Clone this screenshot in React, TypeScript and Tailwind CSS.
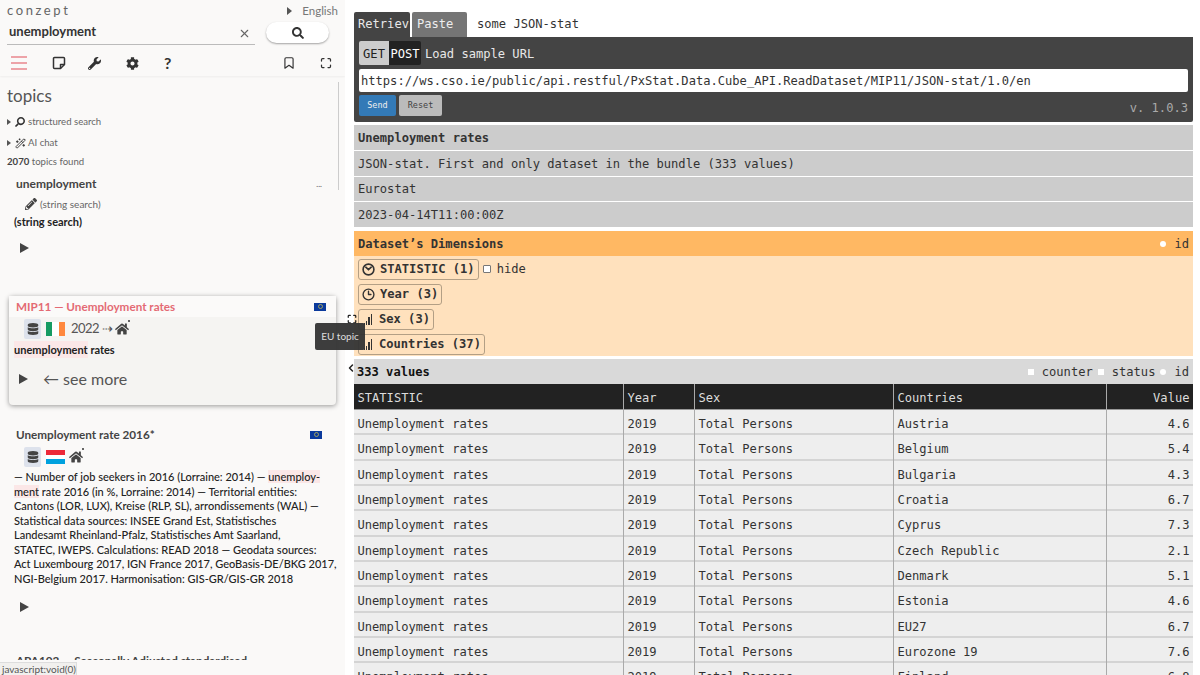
import { FaCog, FaDatabase, FaHome, FaPencilAlt, FaSearch, FaWrench } from "react-icons/fa"
import { FiBookmark, FiMaximize } from "react-icons/fi"
import { LuWandSparkles, LuX, LuChevronLeft, LuClock3 } from "react-icons/lu"

const countries = [
    ["Austria", "4.6"], ["Belgium", "5.4"], ["Bulgaria", "4.3"], ["Croatia", "6.7"], ["Cyprus", "7.3"],
    ["Czech Republic", "2.1"], ["Denmark", "5.1"], ["Estonia", "4.6"], ["EU27", "6.7"], ["Eurozone 19", "7.6"], ["Finland", "6.8"],
]

function Flag({ colors }: { colors: "ie" | "lu" }) {
    if (colors === "ie") {
        return <span className="flex w-[19px] h-[14px]"><span className="flex-1 bg-[#169b62]" /><span className="flex-1 bg-white" /><span className="flex-1 bg-[#ff883e]" /></span>
    }
    return <span className="flex flex-col w-[19px] h-[14px]"><span className="flex-1 bg-[#ed2939]" /><span className="flex-1 bg-white" /><span className="flex-1 bg-[#00a1de]" /></span>
}

function EuFlag() {
    return <span className="w-3 h-2 bg-[#0b3a9c] flex items-center justify-center"><span className="w-[5px] h-[5px] rounded-full border border-[#d6c84a]/70" /></span>
}

function Arrow() {
    return <span className="block w-0 h-0 border-y-[5px] border-y-transparent border-l-[9px] border-l-[#444]" />
}

function Note() {
    return (
        <svg width="14" height="14" viewBox="0 0 14 14" fill="none" stroke="currentColor" strokeWidth="1.5" strokeLinejoin="round">
            <path d="M2.5 1.5h9a1 1 0 0 1 1 1V8.5L8.5 12.5H2.5a1 1 0 0 1-1-1v-9a1 1 0 0 1 1-1z" />
            <path d="M12.5 8.5H8.5v4" />
        </svg>
    )
}

function Gauge() {
    return (
        <svg width="13" height="13" viewBox="0 0 13 13" fill="none" stroke="currentColor" strokeWidth="1.6" strokeLinecap="round">
            <circle cx="6.5" cy="6.5" r="5.4" />
            <path d="M3.8 4.2l2.7 2.5 2.7-2.5" />
        </svg>
    )
}

function Small({ icon, label }: { icon: React.ReactNode; label: string }) {
    return (
        <div className="flex items-center h-5 text-[9.6px] text-[#666]">
            <span className="w-0 h-0 border-y-[3px] border-y-transparent border-l-[4px] border-l-[#555] mr-[4px]" />
            <span className="w-[12px] text-[#333] mr-[1px]">{icon}</span>
            {label}
        </div>
    )
}

function TopicIcons({ flag, year }: { flag: "ie" | "lu"; year?: boolean }) {
    return (
        <div className="flex items-center h-[20px] pl-[24px] gap-[5px] text-[#444]">
            <span className="w-[17px] h-[20px] bg-[#dde2ec] rounded-[2px] flex items-center justify-center"><FaDatabase size={12} /></span>
            <Flag colors={flag} />
            {year && <span className="text-[13px] tracking-[-0.5px] text-[#555] ml-[1px] -mr-[2px] whitespace-nowrap">2022 ⇢</span>}
            <span className="relative -ml-[1px]"><FaHome size={14} /><span className="absolute -right-[1px] -top-[2px] w-[2px] h-[2px] rounded-full bg-[#333]" /></span>
        </div>
    )
}

function LeftPanel() {
    return (
        <aside className="relative w-[345px] h-full shrink-0 bg-[#faf9f8] font-['Lato',sans-serif] overflow-hidden">
            <div className="h-[76px] pl-[7px] pr-[7px] pt-[3px] shadow-[0_1px_2px_rgba(0,0,0,0.05)]">
                <div className="flex justify-between items-center h-[16px]">
                    <span className="text-[13px] tracking-[0.2em] text-[#666]">conzept</span>
                    <span className="flex items-center gap-[10px] text-[11.5px] text-[#777]"><span className="w-0 h-0 border-y-[4px] border-y-transparent border-l-[5px] border-l-[#555]" />English</span>
                </div>
                <div className="flex items-center mt-[1px]">
                    <div className="flex items-center justify-between w-[248px] h-[25px] border-b border-[#bbb] pl-[2px] pr-[4px] text-[13px] font-bold text-[#333]">
                        unemployment
                        <LuX size={13} className="text-[#666] mt-[3px]" />
                    </div>
                    <div className="ml-[11px] w-[63px] h-[21px] rounded-full bg-white shadow-[0_1px_2px_rgba(0,0,0,0.35)] flex items-center justify-center text-[#333]"><FaSearch size={12} /></div>
                </div>
                <div className="flex items-center h-[26px] mt-[5px] text-[#333]">
                    <span className="w-[16px] ml-[4px] flex flex-col gap-[4px]"><span className="h-[2px] bg-[#eda3a8]" /><span className="h-[2px] bg-[#eda3a8]" /><span className="h-[2px] bg-[#eda3a8]" /></span>
                    <span className="ml-[25px]"><Note /></span>
                    <FaWrench size={13} className="ml-[22px]" />
                    <FaCog size={13} className="ml-[25px]" />
                    <span className="ml-[25px] text-[16px] leading-none font-bold">?</span>
                    <FiBookmark size={14} className="ml-auto" />
                    <FiMaximize size={12} strokeWidth={2.5} className="ml-[24px] mr-[6px]" />
                </div>
            </div>
            <div className="pl-[7px] pr-[15px]">
                <h2 className="text-[17px] leading-[24px] mt-[8px] text-[#555] mb-[4px]">topics</h2>
                <Small icon={<FaSearch size={10} className="-scale-x-100" />} label="structured search" />
                <div className="mt-[1px]"><Small icon={<LuWandSparkles size={11} />} label="AI chat" /></div>
                <div className="text-[9.6px] leading-[18px] text-[#666]"><b className="text-[#444]">2070</b> topics found</div>
                <div className="flex justify-between items-center pl-[9px] pr-[8px] h-[24px] mt-[1px] text-[12px] font-bold text-[#444]">unemployment<span className="text-[8px] text-[#777]">...</span></div>
                <div className="flex items-center pl-[18px] gap-[2px] h-[16px] text-[10px] text-[#666]"><FaPencilAlt size={12} className="text-[#444]" /> <span className="ml-[1px]">(string search)</span></div>
                <div className="text-[11px] leading-[19px] font-bold text-[#222] pl-[7px]">(string search)</div>
                <div className="h-[22px] flex items-end pl-[13px]"><Arrow /></div>
            </div>
            <div className="mx-[9px] mt-[43px] h-[109px] rounded-[4px] bg-[#f5f4f2] shadow-[0_1px_5px_rgba(0,0,0,0.4)] text-[#222]">
                <div className="h-[21px] bg-[#fbfaf9] flex items-center justify-between pl-[7px] pr-[10px] text-[11.7px] font-bold text-[#e46a74]">MIP11 — Unemployment rates<EuFlag /></div>
                <div className="pt-[2px] -ml-[9px]"><TopicIcons flag="ie" year /></div>
                <div className="pl-[5px] mt-[2px] text-[11px] leading-[17px] font-bold"><span className="bg-[#fbe7e7] inline-block">unemployment</span> rates</div>
                <div className="flex items-center h-[22px] mt-[10px] pl-[10px] text-[#555]"><Arrow /><span className="ml-[15px] text-[16px]">← see more</span></div>
            </div>
            <div className="pl-[7px] pr-[15px] mt-[20px]">
                <div className="flex items-center justify-between h-[19px] pl-[9px] pr-[8px] text-[11.7px] font-bold text-[#444]">Unemployment rate 2016*<EuFlag /></div>
                <div className="mt-[3px] -ml-[7px]"><TopicIcons flag="lu" /></div>
                <p className="mt-[3px] pl-[7px] text-[11px] leading-[14.5px] font-medium text-[#222] whitespace-nowrap">
                    — Number of job seekers in 2016 (Lorraine: 2014) — <span className="bg-[#fbe7e7]">unemploy-</span><br />
                    <span className="bg-[#fbe7e7]">ment</span> rate 2016 (in %, Lorraine: 2014) — Territorial entities:<br />
                    Cantons (LOR, LUX), Kreise (RLP, SL), arrondissements (WAL) —<br />
                    Statistical data sources: INSEE Grand Est, Statistisches<br />
                    Landesamt Rheinland-Pfalz, Statistisches Amt Saarland,<br />
                    STATEC, IWEPS. Calculations: READ 2018 — Geodata sources:<br />
                    Act Luxembourg 2017, IGN France 2017, GeoBasis-DE/BKG 2017,<br />
                    NGI-Belgium 2017. Harmonisation: GIS-GR/GIS-GR 2018
                </p>
                <div className="mt-[16px] pl-[13px]"><Arrow /></div>
                <div className="mt-[39px] h-[9px] overflow-hidden pl-[9px] text-[11.7px] leading-[19px] font-bold text-[#444] whitespace-nowrap">APA102 — Seasonally Adjusted standardised</div>
            </div>
            <div className="absolute left-0 bottom-0 h-[13px] w-[77px] bg-[#f1f0ee] border-t border-r border-[#ddd] text-[10px] leading-[12px] pl-[2px] text-[#555] whitespace-nowrap">javascript:void(0)</div>
            <div className="absolute right-[6px] top-[82px] w-[1px] h-[108px] bg-[#ccc]" />
        </aside>
    )
}

function Dimension({ icon, label, note }: { icon: React.ReactNode; label: string; note?: boolean }) {
    return (
        <div className="flex items-center h-[25px] pt-[1px]">
            <span className="ml-[4px] flex items-center h-[21px] px-[3px] gap-[5px] border border-[#b39f85] rounded-[3px] font-bold text-[#333]">{icon}{label}</span>
            {note && <span className="flex items-center ml-[4px] text-[#333]"><span className="w-[8px] h-[8px] bg-white border border-[#777] rounded-[1px] mr-[6px]" />hide</span>}
        </div>
    )
}

function Bars() {
    return <span className="flex items-end gap-[1px] h-[12px] w-[12px] justify-center"><span className="w-[1px] h-[2px] bg-[#333]" /><span className="w-[1px] h-[4px] bg-[#333]" /><span className="w-[2px] h-[8px] bg-[#333]" /><span className="w-[1px] h-[11px] bg-[#333]" /></span>
}

function Toggle({ label, round, className = "" }: { label: string; round?: boolean; className?: string }) {
    return <span className={`flex items-center gap-[8px] ${className}`}><span className={`w-[6px] h-[6px] bg-white ${round ? "rounded-full" : ""}`} />{label}</span>
}

const grid = "grid grid-cols-[270px_71px_199px_213px_1fr]"

function Cell({ children, right }: { children: React.ReactNode; right?: boolean }) {
    return <div className={`px-[3.5px] border-r border-[#aaa] last:border-r-0 ${right ? "text-right" : ""}`}>{children}</div>
}

function RightPanel() {
    return (
        <main className="flex-1 min-w-0 pl-[9px] pr-[7px] pt-[12px] font-['DejaVu_Sans_Mono',monospace] text-[12.1px] text-[#333] overflow-hidden">
            <div className="flex items-end h-[25px]">
                <span className="w-[56px] h-[25px] pl-[4px] bg-[#444] rounded-t-[2px] text-[#e8e8e8] leading-[24px] overflow-hidden whitespace-nowrap">Retriev</span>
                <span className="ml-[2px] w-[55px] h-[25px] pl-[5px] bg-[#757575] rounded-t-[2px] text-[#eee] leading-[24px]">Paste</span>
                <span className="ml-[10px] h-[25px] leading-[24px]">some JSON-stat</span>
            </div>
            <div className="h-[85px] bg-[#444] rounded-b-[2px] px-[5px] pt-[4px] relative">
                <div className="flex items-center h-[24px] text-[#e8e8e8] leading-[26px]">
                    <span className="w-[30px] h-[24px] bg-[#ccc] text-[#222] rounded-l-[2px] text-center">GET</span>
                    <span className="w-[32px] h-[24px] bg-[#222] text-white rounded-r-[2px] text-center">POST</span>
                    <span className="ml-[4px] h-[24px]">Load sample URL</span>
                </div>
                <div className="mt-[4px] h-[23px] bg-white rounded-[2px] pl-[2px] leading-[25px] text-[#333] whitespace-nowrap">https://ws.cso.ie/public/api.restful/PxStat.Data.Cube_API.ReadDataset/MIP11/JSON-stat/1.0/en</div>
                <div className="flex mt-[3px] gap-[3px] text-[8.5px]">
                    <span className="w-[37px] h-[21px] bg-[#337ab7] text-[#eee] rounded-[2px] text-center leading-[21px]">Send</span>
                    <span className="w-[43px] h-[21px] bg-[#bbb] text-[#444] rounded-[2px] text-center leading-[21px]">Reset</span>
                </div>
                <span className="absolute right-[5px] bottom-[5px] text-[#aaa]">v. 1.0.3</span>
            </div>
            <div className="mt-[3px] flex flex-col gap-[1px]">
                <div className="h-[25px] bg-[#ccc] pl-[4px] leading-[27px] font-bold">Unemployment rates</div>
                <div className="h-[25px] bg-[#ccc] pl-[4px] leading-[27px]">JSON-stat. First and only dataset in the bundle (333 values)</div>
                <div className="h-[24px] bg-[#ccc] pl-[4px] leading-[25px]">Eurostat</div>
                <div className="h-[25px] bg-[#ccc] pl-[4px] leading-[26px]">2023-04-14T11:00:00Z</div>
            </div>
            <div className="mt-[4px] flex justify-between items-center h-[25px] pt-[1px] bg-[#ffb863] px-[4px] font-bold">Dataset’s Dimensions<Toggle label="id" round className="font-normal" /></div>
            <div className="h-[100px] bg-[#ffe1bd]">
                <Dimension icon={<Gauge />} label="STATISTIC (1)" note />
                <Dimension icon={<LuClock3 size={13} strokeWidth={2.5} />} label="Year (3)" />
                <Dimension icon={<Bars />} label="Sex (3)" />
                <Dimension icon={<Bars />} label="Countries (37)" />
            </div>
            <div className="mt-[3px] flex justify-between items-center h-[25px] pt-[1px] bg-[#d9d9d9] px-[4px]">
                <b className="text-[#111] -ml-[1px]">333 values</b>
                <span className="flex gap-[5px]"><Toggle label="counter" /><Toggle label="status" /><Toggle label="id" round /></span>
            </div>
            <div className={`${grid} h-[26px] leading-[28px] bg-[#222] text-[#ddd] border-b border-[#999]`}>
                <Cell>STATISTIC</Cell><Cell>Year</Cell><Cell>Sex</Cell><Cell>Countries</Cell><Cell right>Value</Cell>
            </div>
            {countries.map(([country, value]) => (
                <div key={country} className={`${grid} h-[25.35px] leading-[29px] bg-[#eee] border-b-2 border-[#d4d4d4]`}>
                    <Cell>Unemployment rates</Cell><Cell>2019</Cell><Cell>Total Persons</Cell><Cell>{country}</Cell><Cell right>{value}</Cell>
                </div>
            ))}
        </main>
    )
}

export default function App() {
    return (
        <div className="relative flex w-[1200px] h-[675px] overflow-hidden bg-white">
            <LeftPanel />
            <RightPanel />
            <FiMaximize size={10} strokeWidth={3} className="absolute left-[347px] top-[314px] text-[#222]" />
            <div className="absolute left-[315px] top-[323px] w-[50px] h-[27px] bg-[#333]/95 rounded-[2px] text-[#ddd] font-['Lato',sans-serif] text-[10px] leading-[27px] text-center">EU topic</div>
            <LuChevronLeft size={12} className="absolute left-[345px] top-[362px] text-[#222]" strokeWidth={3} />
        </div>
    )
}
